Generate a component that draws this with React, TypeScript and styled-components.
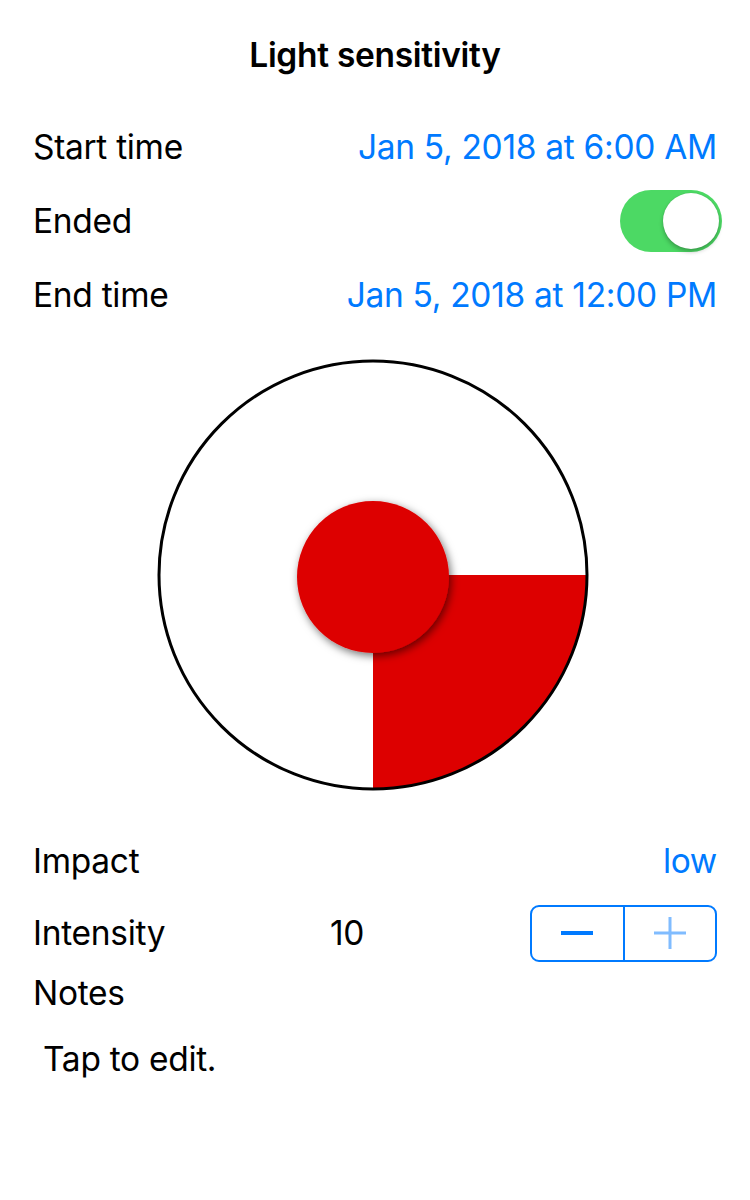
import React from 'react';
import styled, { createGlobalStyle } from 'styled-components';

const GlobalStyle = createGlobalStyle`
  html, body {
    margin: 0;
    padding: 0;
    background: #ffffff;
  }
  body {
    font-family: Inter, "Noto Sans", "Liberation Sans", sans-serif;
    color: #000000;
    -webkit-font-smoothing: antialiased;
  }
`;

const BLUE = '#007aff';
const RED = '#dd0000';

const Page = styled.div`
  width: 750px;
  height: 1200px;
  box-sizing: border-box;
  padding: 0 33px;
  display: flex;
  flex-direction: column;
`;

const Header = styled.div`
  height: 110px;
  display: flex;
  align-items: center;
  justify-content: center;
  font-size: 33.5px;
  font-weight: 600;
  letter-spacing: -0.3px;
`;

const Row = styled.div<{ $h?: number }>`
  height: ${(p) => p.$h ?? 74}px;
  display: flex;
  align-items: center;
  justify-content: space-between;
  font-size: 33.5px;
  letter-spacing: -0.3px;
`;

const Label = styled.span`
  color: #000;
`;

const Value = styled.span`
  color: ${BLUE};
`;

const Switch = styled.div`
  width: 102px;
  height: 62px;
  border-radius: 31px;
  background: #4cd964;
  margin-right: -5px;
  display: flex;
  align-items: center;
  justify-content: flex-end;
  padding: 0 3px;
  box-sizing: border-box;
`;

const Knob = styled.div`
  width: 56px;
  height: 56px;
  border-radius: 50%;
  background: #ffffff;
  box-shadow: 0 3px 4px rgba(0, 0, 0, 0.25), 0 0 1px rgba(0, 0, 0, 0.2);
`;

const ChartWrap = styled.div`
  padding-top: 27px;
  padding-right: 4px;
  height: 493px;
  box-sizing: border-box;
  display: flex;
  justify-content: center;
  align-items: flex-start;
`;

const IntensityRow = styled.div`
  height: 72px;
  display: grid;
  grid-template-columns: 297px 1fr auto;
  align-items: center;
  font-size: 33.5px;
  letter-spacing: -0.3px;
`;

const Stepper = styled.div`
  width: 187px;
  height: 57px;
  box-sizing: border-box;
  border: 2px solid ${BLUE};
  border-radius: 9px;
  display: flex;
  overflow: hidden;
`;

const StepButton = styled.div<{ $divider?: boolean }>`
  flex: 1;
  display: flex;
  align-items: center;
  justify-content: center;
  border-left: ${(p) => (p.$divider ? `2px solid ${BLUE}` : 'none')};
`;

const Notes = styled.div`
  padding-left: 10px;
  height: 84px;
  display: flex;
  align-items: center;
  font-size: 33.5px;
  letter-spacing: -0.3px;
`;

const Chart = () => (
  <svg width="432" height="436" viewBox="0 0 432 436">
    <defs>
      <filter id="shadow" x="-30%" y="-30%" width="160%" height="160%">
        <feDropShadow dx="2" dy="3" stdDeviation="4" floodColor="#000" floodOpacity="0.55" />
      </filter>
    </defs>
    <path d="M216 216 L430 216 A214 214 0 0 1 216 430 Z" fill={RED} />
    <circle cx="216" cy="216" r="214" fill="none" stroke="#000" strokeWidth="3" />
    <circle cx="216" cy="218" r="76" fill={RED} filter="url(#shadow)" />
  </svg>
);

export default function App() {
  return (
    <>
      <GlobalStyle />
      <Page>
        <Header>Light sensitivity</Header>
        <Row>
          <Label>Start time</Label>
          <Value>Jan 5, 2018 at 6:00 AM</Value>
        </Row>
        <Row>
          <Label>Ended</Label>
          <Switch>
            <Knob />
          </Switch>
        </Row>
        <Row>
          <Label>End time</Label>
          <Value>Jan 5, 2018 at 12:00 PM</Value>
        </Row>
        <ChartWrap>
          <Chart />
        </ChartWrap>
        <Row $h={72}>
          <Label>Impact</Label>
          <Value>low</Value>
        </Row>
        <IntensityRow>
          <Label>Intensity</Label>
          <span>10</span>
          <Stepper>
            <StepButton>
              <svg width="32" height="4" viewBox="0 0 32 4">
                <rect x="0" y="0" width="32" height="4" fill={BLUE} />
              </svg>
            </StepButton>
            <StepButton $divider>
              <svg width="32" height="32" viewBox="0 0 32 32">
                <rect x="0" y="14.5" width="32" height="3" fill="#80bcff" />
                <rect x="14.5" y="0" width="3" height="32" fill="#80bcff" />
              </svg>
            </StepButton>
          </Stepper>
        </IntensityRow>
        <Row $h={48}>
          <Label>Notes</Label>
        </Row>
        <Notes>Tap to edit.</Notes>
      </Page>
    </>
  );
}
